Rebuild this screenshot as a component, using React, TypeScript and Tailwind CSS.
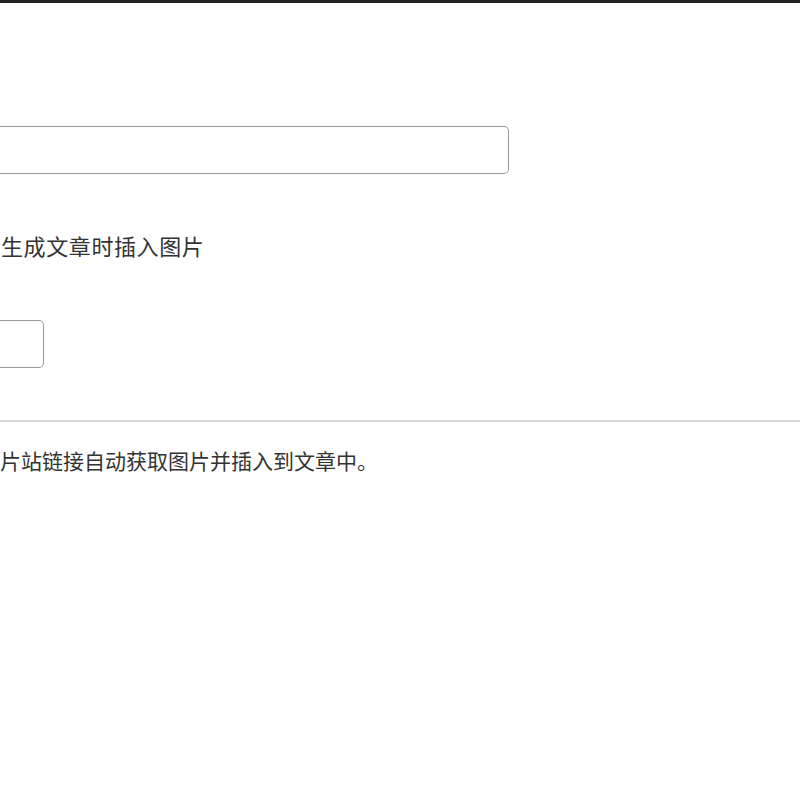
export default function App() {
  return (
    <div className="min-h-[800px] bg-white font-['Noto_Sans_CJK_SC',sans-serif] text-[#333]">
      <div className="h-[3px] bg-[#222]" />
      <div className="flex flex-col">
        <div className="h-[123px]" />
        <div className="h-[48px] w-[509px] rounded-r-[5px] border border-l-0 border-[#9a9a9a]" />
        <div className="mt-[49px] pl-[1px] text-[22px] leading-[44px] tracking-[0.6px] text-[#333]">生成文章时插入图片</div>
        <div className="mt-[53px] h-[48px] w-[44px] rounded-r-[5px] border border-l-0 border-[#9a9a9a]" />
        <div className="mt-[52px] h-[2px] w-full bg-[#d4d4d4]" />
        <div className="mt-[20px] text-[21px] leading-[36px] text-[#333]">片站链接自动获取图片并插入到文章中。</div>
      </div>
    </div>
  );
}
